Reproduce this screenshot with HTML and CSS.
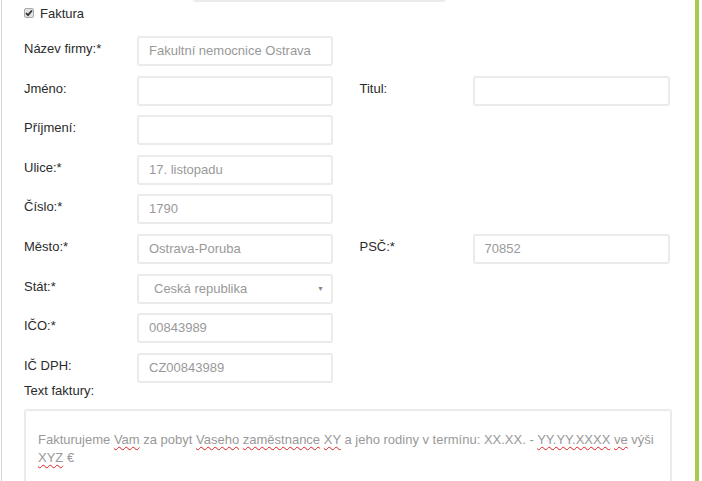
FILE: index.html
```html
<!DOCTYPE html>
<html lang="cs">
<head>
  <meta charset="UTF-8" />
  <title>Faktura</title>
  <link rel="stylesheet" href="styles.css">
</head>
<body>

<div class="page">
  <div class="prev-input"></div>

  <div class="check-row">
    <span class="check">
      <svg width="8" height="8" viewBox="0 0 8 8"><path d="M1 4.2 L3 6.2 L7 1.5" fill="none" stroke="#333" stroke-width="1.8"/></svg>
    </span>
    <span>Faktura</span>
  </div>

  <div class="row">
    <div class="field">
      <label>Název firmy:*</label>
      <div class="input">Fakultní nemocnice Ostrava</div>
    </div>
  </div>

  <div class="row">
    <div class="field">
      <label>Jméno:</label>
      <div class="input"></div>
    </div>
    <div class="field field-right">
      <label>Titul:</label>
      <div class="input"></div>
    </div>
  </div>

  <div class="row">
    <div class="field">
      <label>Příjmení:</label>
      <div class="input"></div>
    </div>
  </div>

  <div class="row">
    <div class="field">
      <label>Ulice:*</label>
      <div class="input">17. listopadu</div>
    </div>
  </div>

  <div class="row">
    <div class="field">
      <label>Číslo:*</label>
      <div class="input">1790</div>
    </div>
  </div>

  <div class="row">
    <div class="field">
      <label>Město:*</label>
      <div class="input">Ostrava-Poruba</div>
    </div>
    <div class="field field-right">
      <label>PSČ:*</label>
      <div class="input">70852</div>
    </div>
  </div>

  <div class="row">
    <div class="field">
      <label>Stát:*</label>
      <div class="input select">
        <span>Ceská republika</span>
        <span class="arrow">&#9660;</span>
      </div>
    </div>
  </div>

  <div class="row">
    <div class="field">
      <label>IČO:*</label>
      <div class="input">00843989</div>
    </div>
  </div>

  <div class="row">
    <div class="field">
      <label>IČ DPH:</label>
      <div class="input">CZ00843989</div>
    </div>
  </div>

  <div class="text-label">Text faktury:</div>
  <div class="textarea">
    Fakturujeme <span class="spell">Vam</span> za pobyt <span class="spell">Vaseho</span> <span class="spell">zaměstnance</span> <span class="spell">XY</span> a jeho rodiny v termínu: XX.XX. - <span class="spell">YY.YY.XXXX</span> <span class="spell">ve</span> výši <span class="spell">XYZ</span> €
  </div>
</div>

</body>
</html>
```

FILE: styles.css
```css
* {
  box-sizing: border-box;
}

body {
  margin: 0;
  font-family: 'Liberation Sans', Arial, sans-serif;
  font-size: 13px;
  color: #2b2b2b;
  background: #fff;
  overflow: hidden;
}

.page {
  margin-left: 1px;
  margin-right: 3px;
  border-left: 1px solid #d4d4d4;
  border-right: 4px solid #a8c84e;
  padding-left: 22px;
  height: 481px;
  overflow: hidden;
}

.prev-input {
  margin-top: -28px;
  margin-left: 169px;
  width: 253px;
  height: 30px;
  border: 2px solid #ebebeb;
  border-radius: 3px;
}

.check-row {
  display: flex;
  align-items: center;
  gap: 6px;
  height: 10px;
  margin-top: 6px;
  margin-bottom: 18px;
}

.check {
  width: 10px;
  height: 10px;
  border: 1px solid #a9a9a9;
  border-radius: 2px;
  background: #e3e3e3;
  display: flex;
  align-items: center;
  justify-content: center;
}

.row {
  display: flex;
  height: 30px;
  margin-bottom: 9.6px;
}

.field {
  display: flex;
  width: 337px;
}

.field label {
  width: 113px;
  padding-top: 5px;
}

.field .input {
  width: 196px;
}

.field-right .input {
  width: 197px;
}

.input {
  height: 30px;
  border: 2px solid #ebebeb;
  border-radius: 3px;
  padding: 0 10px;
  font-size: 13px;
  color: #999;
  line-height: 26px;
}

.select {
  display: flex;
  justify-content: space-between;
  padding-left: 15px;
  padding-right: 7px;
}

.arrow {
  font-size: 7px;
  color: #888;
}

.text-label {
  margin-top: -9.6px;
  height: 26px;
  line-height: 15px;
}

.textarea {
  width: 648px;
  height: 90px;
  border: 2px solid #ebebeb;
  border-radius: 3px;
  padding: 20px 12px 0;
  font-size: 13px;
  line-height: 18px;
  color: #999;
}

.spell {
  text-decoration: underline wavy #e02020;
  text-decoration-thickness: 1px;
  text-underline-offset: 2px;
}
```
